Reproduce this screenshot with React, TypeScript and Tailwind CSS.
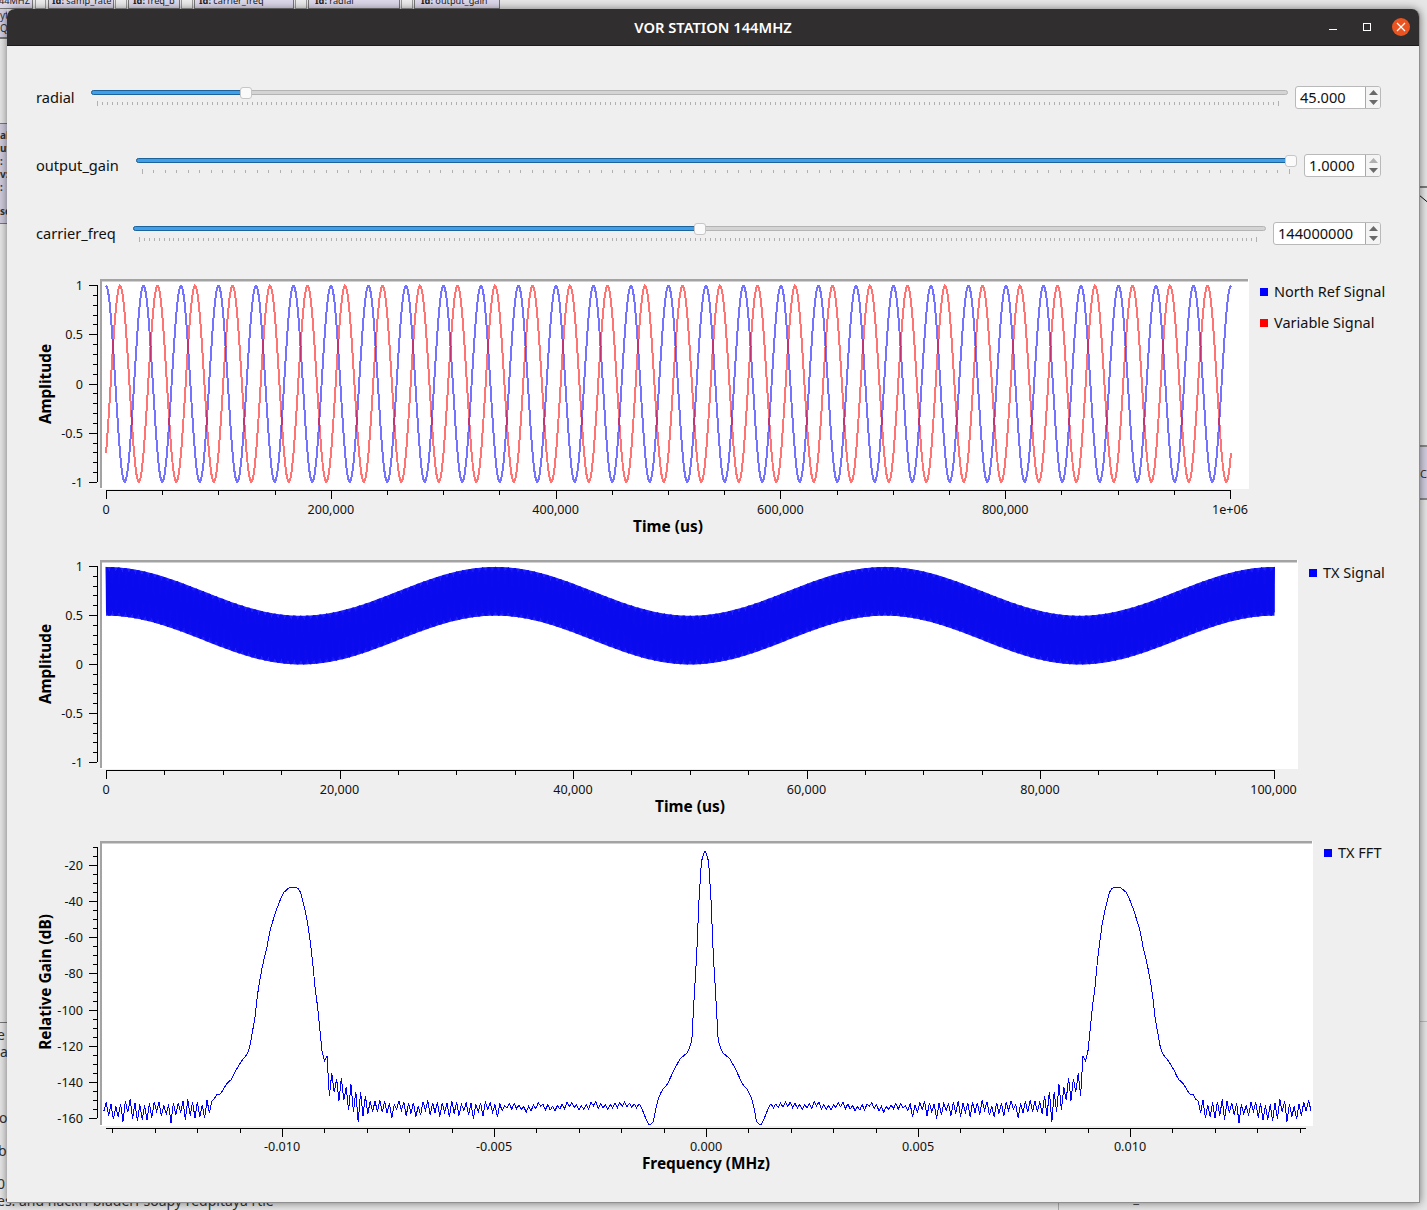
import React from "react";

const FONT = "font-['Noto_Sans','Open_Sans',sans-serif]";

function range(n: number) {
  return Array.from({ length: n }, (_, i) => i);
}

function Spin({ value, w, dim }: { value: string; w: string; dim?: boolean }) {
  return (
    <div className={`${w} h-[23px] shrink-0 flex bg-white border border-[#b9b9b9] rounded-[3px] overflow-hidden`}>
      <div className="flex-1 pl-[4px] text-[14.6px] leading-[20px] text-[#111]">{value}</div>
      <div className="w-[15px] flex flex-col items-center justify-center gap-[5px] border-l border-[#a8a8a8] bg-[#f4f4f4]">
        <svg width="9" height="5" viewBox="0 0 9 5"><polygon points="4.5,0 9,5 0,5" fill={dim ? "#b0b0b0" : "#6a6a6a"} /></svg>
        <svg width="9" height="5" viewBox="0 0 9 5"><polygon points="0,0 9,0 4.5,5" fill="#6a6a6a" /></svg>
      </div>
    </div>
  );
}

function Slider({ fill, handle, ticks }: { fill: string; handle: string; ticks: number }) {
  return (
    <div className="relative flex-1 pt-[1px]">
      <div className="h-[5px] rounded-[3px] bg-[#d4d4d4] border border-[#b4b4b4]">
        <div className={`${fill} h-[5px] -mt-[1px] -ml-[1px] rounded-[3px] bg-[#3f9fe8] border border-[#1d6299]`} />
      </div>
      <div className="mt-[6px] px-[6px] h-[5px] flex justify-between items-center">
        {range(ticks + 1).map((i) => (
          <div key={i} className={`w-[1px] bg-[#b0b0b0] ${i === 0 || i === ticks ? "h-[5px]" : "h-[3px]"}`} />
        ))}
      </div>
      <div className={`absolute ${handle} top-[-2px] w-[12px] h-[12px] rounded-[3px] bg-[#fafafa] border border-[#c6c6c6]`} />
    </div>
  );
}

function Row({ label, lw, fill, handle, ticks, value, sw, dim }: { label: string; lw: string; fill: string; handle: string; ticks: number; value: string; sw: string; dim?: boolean }) {
  return (
    <div className="h-[68px] flex items-center gap-[7px]">
      <div className={`${lw} -mr-[7px] pt-[2px] text-[14.6px] text-[#111] shrink-0`}>{label}</div>
      <Slider fill={fill} handle={handle} ticks={ticks} />
      <Spin value={value} w={sw} dim={dim} />
    </div>
  );
}

type Tick = { at: number; label: string };

function Axes({
  ys, yMinor, xs, xMinor, yAxis, xAxisY, xFrom, xTo, yTitle, yTitleAt, xTitle, xTitleAt, labelDy, titleDy,
}: {
  ys: Tick[]; yMinor: number[]; xs: Tick[]; xMinor: number[]; yAxis: [number, number]; xAxisY: number; xFrom: number; xTo: number;
  yTitle: string; yTitleAt: number; xTitle: string; xTitleAt: number; labelDy: number; titleDy: number;
}) {
  return (
    <g>
      <g stroke="#000" strokeWidth="1" shapeRendering="crispEdges">
        <line x1="97.5" x2="97.5" y1={yAxis[0]} y2={yAxis[1]} />
        {ys.map((t) => <line key={t.label} x1="89" x2="97" y1={t.at} y2={t.at} />)}
        {yMinor.map((y) => <line key={y} x1="93" x2="97" y1={y} y2={y} />)}
        <line x1={xFrom} x2={xTo} y1={xAxisY} y2={xAxisY} />
        {xs.map((t) => <line key={t.label} x1={t.at} x2={t.at} y1={xAxisY} y2={xAxisY + 8} />)}
        {xMinor.map((x) => <line key={x} x1={x} x2={x} y1={xAxisY} y2={xAxisY + 4} />)}
      </g>
      <g fill="#111" className="text-[12.6px]">
        {ys.map((t) => <text key={t.label} x="83" y={t.at + 4.5} textAnchor="end">{t.label}</text>)}
        {xs.map((t) => <text key={t.label} x={t.at - 0.5} y={xAxisY + labelDy} textAnchor="middle">{t.label}</text>)}
      </g>
      <g fill="#000" className="text-[15.4px] font-bold">
        <text x={xTitleAt} y={xAxisY + titleDy} textAnchor="middle">{xTitle}</text>
        <text transform={`rotate(-90 45 ${yTitleAt})`} x="45" y={yTitleAt + 6} textAnchor="middle">{yTitle}</text>
      </g>
    </g>
  );
}

function Canvas({ top, right, bottom }: { top: number; right: number; bottom: number }) {
  return (
    <g>
      <rect x="100" y={top} width={right - 100} height={bottom - top} fill="#fff" />
      <rect x="100" y={top} width={right - 101} height="2.5" fill="#a3a3a3" />
      <rect x="100" y={top} width="2" height={bottom - top - 1} fill="#a3a3a3" />
    </g>
  );
}

function Legend({ items, pl, pt }: { items: { c: string; t: string }[]; pl: string; pt: string }) {
  return (
    <div className={`${pl} ${pt} flex flex-col gap-[11px]`}>
      {items.map((it) => (
        <div key={it.t} className="h-[20px] flex items-center gap-[6px] whitespace-nowrap text-[14.5px] text-[#111]">
          <span className={`w-[8px] h-[8px] ${it.c}`} />
          {it.t}
        </div>
      ))}
    </div>
  );
}

function sine(phase: number) {
  const pts: string[] = [];
  for (let x = 106; x <= 1231; x += 1) {
    const th = (2 * Math.PI * 30 * (x - 106)) / 1125 + phase;
    const y = 383.8 - 98.2 * Math.cos(th);
    pts.push(`${x},${y.toFixed(1)}`);
  }
  return pts.join(" ");
}

function amX(i: number, n: number) {
  return 106 + (i / n) * 1168.5;
}

function amEnvelope() {
  const n = 600;
  const top: string[] = [];
  const bottom: string[] = [];
  for (let i = 0; i <= n; i++) {
    const m = 0.5 + 0.25 * Math.cos(2 * Math.PI * 3 * (i / n));
    top.push(`${amX(i, n).toFixed(1)},${(664.5 - 97.6 * (m + 0.25)).toFixed(1)}`);
    bottom.unshift(`${amX(i, n).toFixed(1)},${(664.5 - 97.6 * (m - 0.25)).toFixed(1)}`);
  }
  return top.concat(bottom).join(" ");
}

function amSignal() {
  const pts: string[] = [];
  const n = 4800;
  for (let i = 0; i <= n; i++) {
    const t = (i / n) * 0.1;
    const v = 0.5 + 0.25 * Math.cos(2 * Math.PI * 30 * t) + 0.25 * Math.cos(2 * Math.PI * 9960 * t);
    pts.push(`${amX(i, n).toFixed(2)},${(664.5 - 97.6 * v).toFixed(1)}`);
  }
  return pts.join(" ");
}

const CTRL: [number, number][] = [
  [99, 1108], [210, 1107], [217, 1094], [220, 1095], [227, 1083], [232, 1079], [235, 1072], [242, 1060], [247, 1055], [250, 1046],
  [255, 1017], [258, 990], [263, 963], [267, 947], [270, 930], [277, 908], [283, 893], [290, 887], [295, 887], [300, 890],
  [307, 918], [312, 955], [315, 987], [318, 1010], [322, 1052], [325, 1062], [335, 1084], [345, 1093], [355, 1100], [370, 1106],
  [500, 1107], [640, 1104], [648, 1124], [653, 1124], [657, 1102], [662, 1090], [667, 1085], [675, 1068], [680, 1059], [688, 1052],
  [692, 1040], [694, 1000], [697, 950], [700, 875], [702, 856], [705, 851],
];

function baseAt(x: number) {
  for (let i = 1; i < CTRL.length; i++) {
    if (x <= CTRL[i][0]) {
      const [x0, y0] = CTRL[i - 1];
      const [x1, y1] = CTRL[i];
      return y0 + ((y1 - y0) * (x - x0)) / (x1 - x0);
    }
  }
  return 851;
}

function ampAt(x: number) {
  if (x < 210) return 14;
  if (x < 216) return 3;
  if (x > 325 && x < 372) return 25;
  if (x >= 372 && x < 500) return 11;
  if (x >= 500 && x < 600) return 4.5;
  if (x >= 600 && x < 640) return 4;
  return 0;
}

function spectrum() {
  const left: [number, number][] = [];
  let i = 0;
  for (let x = 99; x < 705; x += 2.4) {
    const h = Math.sin(i * 12.9898) * 43758.5453;
    const f = h - Math.floor(h);
    const r = 0.3 + 0.7 * f;
    const a = ampAt(x);
    const wob = a > 0 ? 1.5 * Math.sin(x * 0.23) : 0;
    left.push([x, baseAt(x) + wob + (i % 2 ? -0.5 : 1) * a * r]);
    i++;
  }
  left.push([705, 851]);
  const right = left.slice(0, -1).reverse().map(([x, y]) => [1410 - x, y] as [number, number]);
  return left.filter(([x]) => x >= 102).concat(right).map(([x, y]) => `${x.toFixed(1)},${y.toFixed(1)}`).join(" ");
}

function ticksBetween(a: number, b: number, div: number) {
  return range(div - 1).map((i) => a + ((b - a) * (i + 1)) / div);
}

function minorsOf(vals: number[], div: number) {
  const out: number[] = [];
  for (let i = 0; i + 1 < vals.length; i++) out.push(...ticksBetween(vals[i], vals[i + 1], div));
  return out;
}

function Plot1() {
  const ys = ["1", "0.5", "0", "-0.5", "-1"].map((label, i) => ({ label, at: 285.5 + i * 49.25 }));
  const xlabels = ["0", "200,000", "400,000", "600,000", "800,000", "1e+06"];
  const xs = xlabels.map((label, i) => ({ label, at: 106.5 + i * 224.8 }));
  return (
    <svg width="1243" height="280" viewBox="7 270 1243 280" className="shrink-0">
      <Canvas top={279} right={1249} bottom={489} />
      <polyline points={sine(0)} fill="none" stroke="#0000ff" strokeOpacity="0.55" strokeWidth="2" shapeRendering="crispEdges" />
      <polyline points={sine((-3 * Math.PI) / 4)} fill="none" stroke="#ff0000" strokeOpacity="0.55" strokeWidth="2" shapeRendering="crispEdges" />
      <Axes ys={ys} yMinor={minorsOf(ys.map((t) => t.at), 5)} xs={xs} xMinor={minorsOf(xs.map((t) => t.at), 4)} yAxis={[285, 482]} xAxisY={490.5} xFrom={106} xTo={1231} yTitle="Amplitude" yTitleAt={384} xTitle="Time (us)" xTitleAt={668} labelDy={23} titleDy={41} />
    </svg>
  );
}

function Plot2() {
  const ys = ["1", "0.5", "0", "-0.5", "-1"].map((label, i) => ({ label, at: 566.5 + i * 49 }));
  const xlabels = ["0", "20,000", "40,000", "60,000", "80,000", "100,000"];
  const xs = xlabels.map((label, i) => ({ label, at: 106.5 + i * 233.5 }));
  return (
    <svg width="1292" height="280" viewBox="7 550 1292 280" className="shrink-0">
      <Canvas top={560} right={1298} bottom={769} />
      <polygon points={amEnvelope()} fill="#2020ff" />
      <polyline points={amSignal()} fill="none" stroke="#0a0aee" strokeWidth="1" />
      <Axes ys={ys} yMinor={minorsOf(ys.map((t) => t.at), 5)} xs={xs} xMinor={minorsOf(xs.map((t) => t.at), 4)} yAxis={[566, 762]} xAxisY={770.5} xFrom={106} xTo={1275} yTitle="Amplitude" yTitleAt={664} xTitle="Time (us)" xTitleAt={690} labelDy={23} titleDy={41} />
    </svg>
  );
}

function Plot3() {
  const ys = ["-20", "-40", "-60", "-80", "-100", "-120", "-140", "-160"].map((label, i) => ({ label, at: 865.5 + i * 36.15 }));
  const xlabels = ["-0.010", "-0.005", "0.000", "0.005", "0.010"];
  const xs = xlabels.map((label, i) => ({ label, at: 282.5 + i * 212 }));
  const minor: number[] = [];
  for (let k = -14; k <= 14; k++) if (k % 5 !== 0) minor.push(706.5 + k * 42.4);
  const yMinor = [847.5, 856].concat(minorsOf(ys.map((t) => t.at), 4));
  return (
    <svg width="1307" height="372" viewBox="7 830 1307 372" className="shrink-0">
      <Canvas top={841} right={1313} bottom={1126} />
      <polyline points={spectrum()} fill="none" stroke="#0000ff" strokeWidth="1" shapeRendering="crispEdges" />
      <Axes ys={ys} yMinor={yMinor} xs={xs} xMinor={minor} yAxis={[847, 1118]} xAxisY={1128.5} xFrom={106} xTo={1306} yTitle="Relative Gain (dB)" yTitleAt={982} xTitle="Frequency (MHz)" xTitleAt={706} labelDy={22} titleDy={40} />
    </svg>
  );
}

function Block({ x, w, id, name, pl }: { x: string; w: string; id: string; name: string; pl: string }) {
  return (
    <div className={`absolute ${x} ${w} ${pl} top-[-6px] h-[15px] bg-[#dcd8ea] border-x border-b border-[#777] text-[9.2px] leading-[14px] whitespace-nowrap overflow-hidden text-[#222]`}>
      {id ? <b>{id} </b> : null}{name}
    </div>
  );
}

function Gap({ x, w }: { x: string; w: string }) {
  return <div className={`absolute ${x} ${w} top-[-2px] h-[11px] bg-[#ececec] border border-[#999]`} />;
}

function Desktop() {
  return (
    <div className="absolute inset-0 bg-[#e6e6e6] text-[#333]">
      <Block x="left-[-40px]" w="w-[73px]" pl="pl-[38px]" id="" name="44MHZ" />
      <Gap x="left-[35px]" w="w-[11px]" />
      <Block x="left-[48px]" w="w-[66px]" pl="pl-[3px]" id="Id:" name="samp_rate" />
      <Gap x="left-[115px]" w="w-[12px]" />
      <Block x="left-[128px]" w="w-[52px]" pl="pl-[4px]" id="Id:" name="freq_b" />
      <Gap x="left-[181px]" w="w-[12px]" />
      <Block x="left-[194px]" w="w-[100px]" pl="pl-[4px]" id="Id:" name="carrier_freq" />
      <Gap x="left-[295px]" w="w-[12px]" />
      <Block x="left-[308px]" w="w-[92px]" pl="pl-[6px]" id="Id:" name="radial" />
      <Gap x="left-[401px]" w="w-[12px]" />
      <Block x="left-[414px]" w="w-[86px]" pl="pl-[6px]" id="Id:" name="output_gain" />
      <div className="absolute left-0 top-[9px] w-[7px] h-[28px] bg-[#d2cee0] text-[10px] leading-[13px] overflow-hidden">yt<br />QT</div>
      <div className="absolute left-0 top-[37px] w-[7px] h-[2px] bg-[#777]" />
      <div className="absolute left-0 top-[123px] w-[7px] h-[101px] bg-[#cfcbdc] border-y border-[#777] text-[10px] font-bold leading-[13px] pt-[5px] overflow-hidden whitespace-nowrap">
        <div>al</div>
        <div>ut</div>
        <div>:</div>
        <div>v:</div>
        <div>:</div>
        <div className="mt-[11px]">se</div>
      </div>
      <div className="absolute left-0 top-[1022px] w-[7px] h-[1px] bg-[#777]" />
      <div className="absolute left-[-3px] top-[1027px] text-[14px] leading-[16px] overflow-hidden w-[10px]">e</div>
      <div className="absolute left-0 top-[1044px] text-[14px] leading-[16px] overflow-hidden w-[7px]">ar</div>
      <div className="absolute left-[-1px] top-[1110px] text-[14px] leading-[16px] w-[8px] overflow-hidden">or</div>
      <div className="absolute left-[-2px] top-[1143px] text-[14px] leading-[16px] w-[9px] overflow-hidden">b</div>
      <div className="absolute left-[-3px] top-[1176px] text-[14px] leading-[16px] w-[10px] overflow-hidden">0</div>
      <div className="absolute left-[-3px] top-[1193px] text-[14px] leading-[16px] whitespace-nowrap">es. and hackrf bladerf soapy redpitaya rtle</div>
      <div className="absolute left-[1058px] top-[1200px] w-[1px] h-[10px] bg-[#aaa]" />
      <div className="absolute left-[1126px] top-[1190px] text-[13px] leading-[16px]">T_</div>
      <div className="absolute left-[1419px] top-[445px] w-[8px] h-[55px] bg-[#d2cee0] border-y-2 border-[#888] text-[11px] leading-[53px] overflow-hidden pl-[1px]">Co</div>
      <div className="absolute left-[1419px] top-[1021px] w-[8px] h-[1px] bg-[#bbb]" />
      <svg className="absolute left-[1419px] top-[180px]" width="8" height="24" viewBox="0 0 8 24">
        <path d="M0 7 H8 M0 15 L8 21.7" fill="none" stroke="#111" strokeWidth="1" />
      </svg>
    </div>
  );
}

export default function App() {
  return (
    <div className={`relative w-[1427px] h-[1210px] overflow-hidden ${FONT}`}>
      <Desktop />
      <div className="absolute left-[7px] top-[9px] w-[1413px] h-[1194px] flex flex-col bg-[#efefef] rounded-t-[8px] overflow-hidden border-r border-b border-[#8f8f8f] shadow-[0_0_9px_rgba(0,0,0,0.5)]">
        <div className="h-[37px] shrink-0 grid grid-cols-[1fr_auto_1fr] items-center bg-[#302e2f] border-b border-[#1c1c1c] text-white">
          <div />
          <div className="text-[14.7px] font-semibold">VOR STATION 144MHZ</div>
          <div className="flex justify-end items-center gap-[16px] pr-[9px]">
            <div className="w-[18px] h-[18px] flex items-center justify-center pt-[5px]"><div className="w-[8px] h-[1px] bg-white" /></div>
            <div className="w-[18px] h-[18px] flex items-center justify-center"><div className="w-[8px] h-[8px] border border-white" /></div>
            <div className="w-[18px] h-[18px] rounded-full bg-[#e95420] flex items-center justify-center">
              <svg width="10" height="10" viewBox="0 0 10 10"><path d="M1 1 L9 9 M9 1 L1 9" stroke="#fff" strokeWidth="1.2" /></svg>
            </div>
          </div>
        </div>
        <div className="flex-1 flex flex-col">
          <div className="pt-[17px] pl-[29px] pr-[38px] h-[224px] shrink-0">
            <Row label="radial" lw="w-[55px]" fill="w-[155px]" handle="left-[149px]" ticks={237} value="45.000" sw="w-[86px]" />
            <Row label="output_gain" lw="w-[100px]" fill="w-full" handle="left-[1149px]" ticks={100} value="1.0000" sw="w-[77px]" dim />
            <Row label="carrier_freq" lw="w-[97px]" fill="w-[566px]" handle="left-[561px]" ticks={227} value="144000000" sw="w-[108px]" />
          </div>
          <div className="flex">
            <Plot1 />
            <Legend pl="pl-[10px]" pt="pt-[12px]" items={[{ c: "bg-[#0000ff]", t: "North Ref Signal" }, { c: "bg-[#ff0000]", t: "Variable Signal" }]} />
          </div>
          <div className="flex">
            <Plot2 />
            <Legend pl="pl-[10px]" pt="pt-[13px]" items={[{ c: "bg-[#0000ff]", t: "TX Signal" }]} />
          </div>
          <div className="flex">
            <Plot3 />
            <Legend pl="pl-[10px]" pt="pt-[13px]" items={[{ c: "bg-[#0000ff]", t: "TX FFT" }]} />
          </div>
        </div>
      </div>
    </div>
  );
}
